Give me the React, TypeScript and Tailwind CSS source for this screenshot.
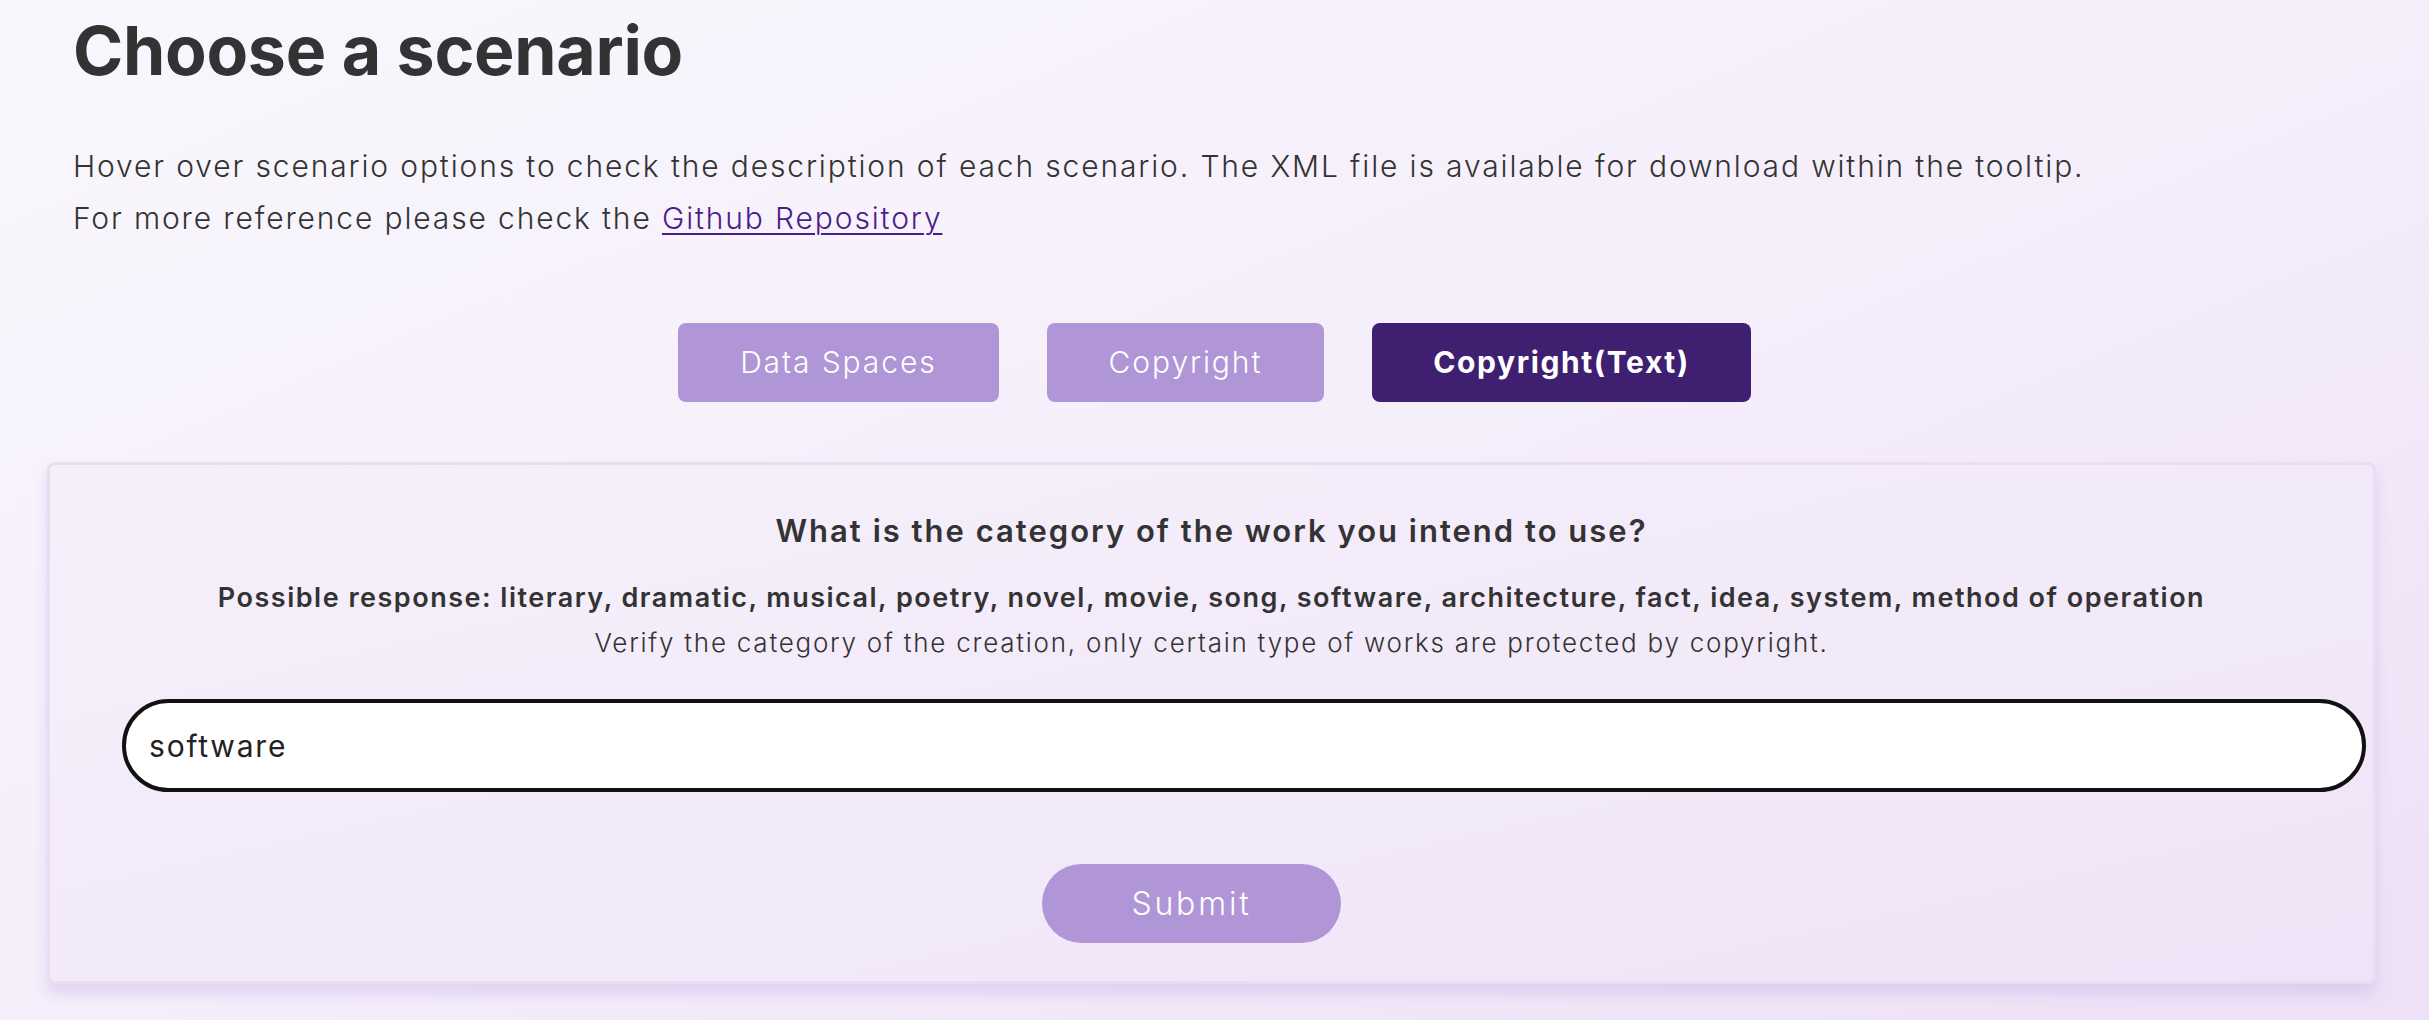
import React from "react";

export default function App() {
  return (
    <div
      className="min-h-screen w-full bg-linear-to-br from-[#f9f7fd] via-[#f5eefb] to-[#eee0f6] text-[#333333] overflow-hidden"
      style={{ fontFamily: "Inter, 'Open Sans', sans-serif" }}
    >
      <div className="pl-[73px] pt-[16px]">
        <h1 className="text-[68px] leading-none font-bold tracking-[-0.3px]">Choose a scenario</h1>
        <div className="mt-[56px] text-[30px] leading-[52px] font-light tracking-[1.86px]">
          <p>
            Hover over scenario options to check the description of each scenario. The XML file is available for download within the tooltip.
          </p>
          <p>
            For more reference please check the{" "}
            <a href="#" className="text-[#4b1d8a] underline underline-offset-4 decoration-2">
              Github Repository
            </a>
          </p>
        </div>
      </div>

      <div className="mt-[79px] flex justify-center gap-[48px]">
        <button className="h-[79px] rounded-[8px] bg-[#b096d6] px-[62px] text-[30px] font-light tracking-[1.9px] text-white">
          Data Spaces
        </button>
        <button className="h-[79px] rounded-[8px] bg-[#b096d6] px-[62px] text-[30px] font-light tracking-[1.9px] text-white">
          Copyright
        </button>
        <button className="h-[79px] rounded-[8px] bg-[#3f1f6f] px-[61px] text-[30px] font-bold tracking-[1.6px] text-white">
          Copyright(Text)
        </button>
      </div>

      <div className="ml-[47px] mr-[53px] mt-[60px] rounded-[8px] border-[3px] border-[#ebdcf3] bg-linear-to-br from-[#f6f0fb] to-[#efe4f7] shadow-[0_10px_14px_rgba(190,165,230,0.35)] pt-[46px] pb-[38px]">
        <div className="flex flex-col items-center">
          <p className="text-[31px] leading-[40px] font-semibold tracking-[2px]">
            What is the category of the work you intend to use?
          </p>
          <p className="mt-[27px] text-[27px] leading-[40px] font-semibold tracking-[1.5px]">
            Possible response: literary, dramatic, musical, poetry, novel, movie, song, software, architecture, fact, idea, system, method of operation
          </p>
          <p className="mt-[7px] text-[26px] leading-[36px] font-light tracking-[1.75px]">
            Verify the category of the creation, only certain type of works are protected by copyright.
          </p>
        </div>
        <div className="mt-[38px] ml-[72px] mr-[7px]">
          <input
            readOnly
            value="software"
            className="h-[93px] w-full rounded-full border-[4px] border-[#111111] bg-white pl-[23px] text-[30px] font-normal tracking-[1.8px] text-[#222] outline-none"
          />
        </div>
        <div className="mt-[72px] flex justify-center">
          <button className="mr-[40px] h-[79px] w-[299px] rounded-full bg-[#b096d6] text-[32px] font-light tracking-[2.8px] text-white">
            Submit
          </button>
        </div>
      </div>
    </div>
  );
}
